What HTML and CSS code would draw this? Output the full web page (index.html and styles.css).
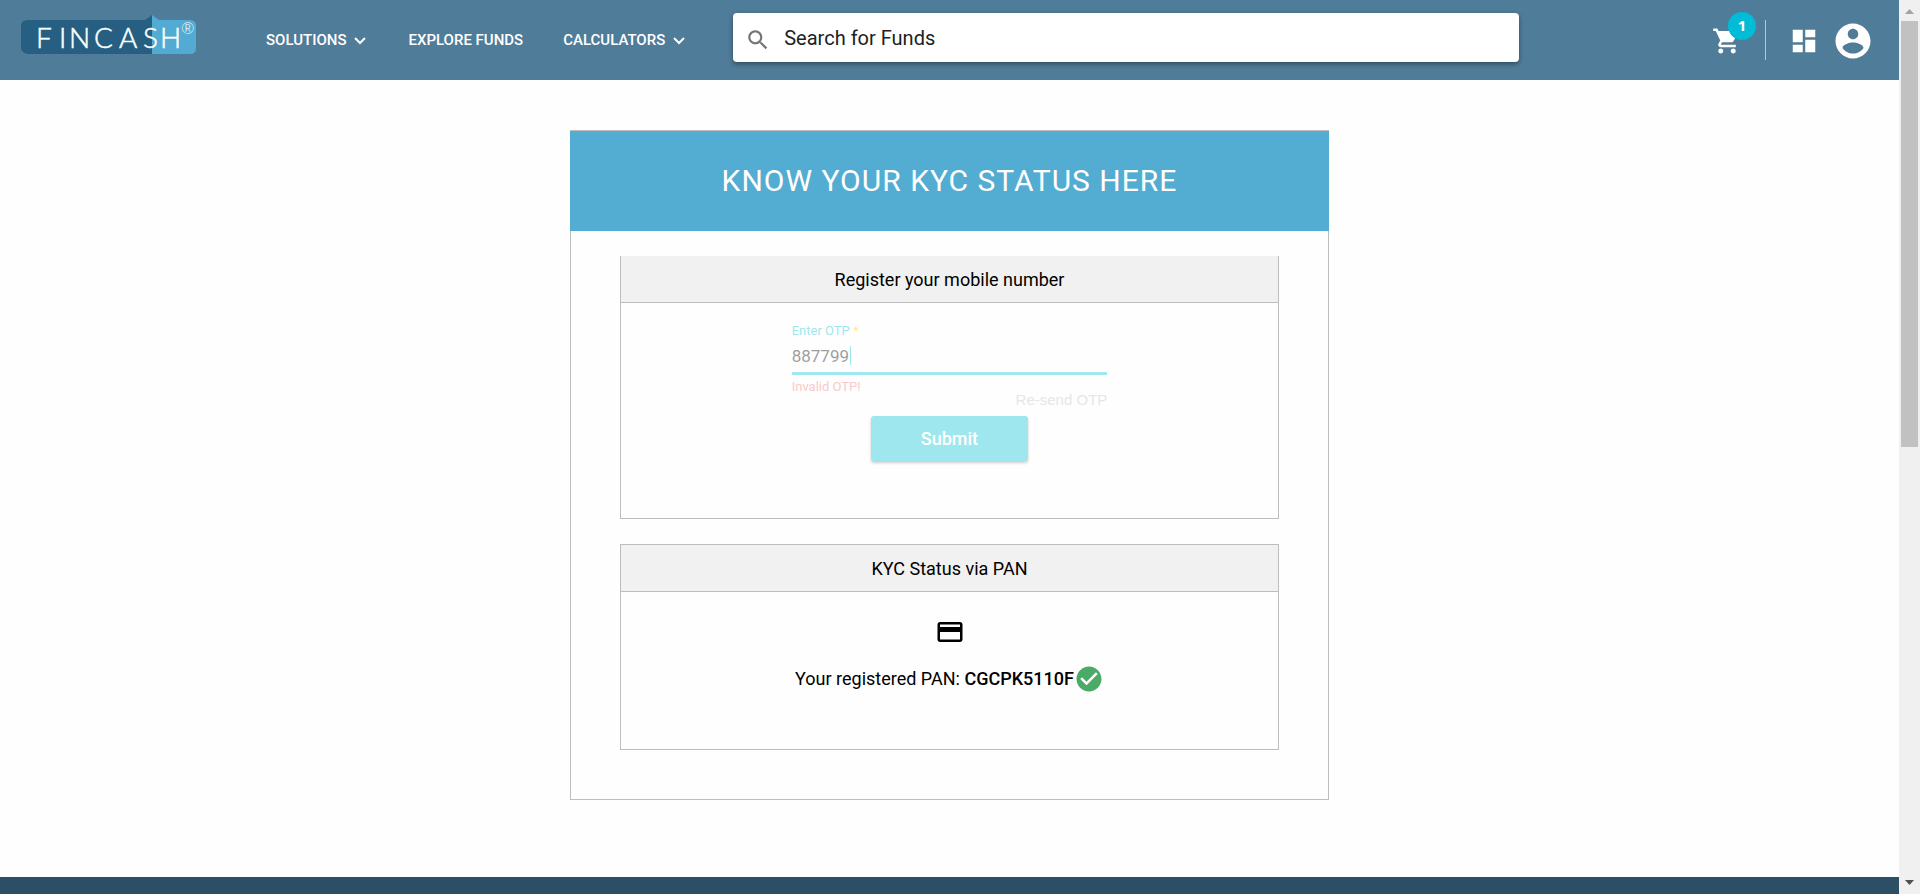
FILE: index.html
```html
<!DOCTYPE html>
<html lang="en">
<head>
<meta charset="utf-8">
<title>Fincash - KYC Status</title>
<link rel="stylesheet" href="styles.css">
</head>
<body>
<div class="page">
  <header class="topbar">
    <a class="logo" href="#" aria-label="Fincash">
      <svg width="176" height="40" viewBox="0 0 176 40">
        <path fill="#265f82" d="M7 5H124L131 0V39H7Q0 38 0 32V11Q0 5 7 5Z"/>
        <path fill="#52abd2" d="M131 0L138 5H169Q175 5 175 11V33Q175 39 169 39H131Z"/>
        <text class="logo-text" x="15 38 48 73 98 122 139" y="33">FINCASH</text>
        <text class="logo-mark" x="160" y="19">®</text>
      </svg>
    </a>
    <nav class="nav">
      <a href="#">SOLUTIONS <svg width="12" height="8" viewBox="0 0 12 8"><path d="M1 1L6 6L11 1"/></svg></a>
      <a href="#">EXPLORE FUNDS</a>
      <a href="#">CALCULATORS <svg width="12" height="8" viewBox="0 0 12 8"><path d="M1 1L6 6L11 1"/></svg></a>
    </nav>
    <label class="search">
      <svg width="26" height="26" viewBox="0 0 24 24"><path d="M15.5 14h-.79l-.28-.27C15.41 12.59 16 11.11 16 9.5 16 5.91 13.09 3 9.5 3S3 5.91 3 9.5 5.91 16 9.5 16c1.61 0 3.09-.59 4.23-1.57l.27.28v.79l5 4.99L20.49 19l-4.99-5zm-6 0C7.01 14 5 11.99 5 9.5S7.01 5 9.5 5 14 7.01 14 9.5 11.99 14 9.5 14z"/></svg>
      <input type="text" placeholder="Search for Funds" aria-label="Search for Funds">
    </label>
    <div class="actions">
      <button class="icon-button cart" aria-label="Cart">
        <svg width="30" height="30" viewBox="0 0 24 24"><path d="M7 18c-1.1 0-1.99.9-1.99 2S5.9 22 7 22s2-.9 2-2-.9-2-2-2zM1 2v2h2l3.6 7.59-1.35 2.45c-.16.28-.25.61-.25.96 0 1.1.9 2 2 2h12v-2H7.42c-.14 0-.25-.11-.25-.25l.03-.12.9-1.63h7.45c.75 0 1.41-.41 1.75-1.03l3.58-6.49c.08-.14.12-.31.12-.48 0-.55-.45-1-1-1H5.21l-.94-2H1zm16 16c-1.1 0-1.99.9-1.99 2s.89 2 1.99 2 2-.9 2-2-.9-2-2-2z"/></svg>
        <span class="badge">1</span>
      </button>
      <span class="divider"></span>
      <button class="icon-button dashboard" aria-label="Dashboard">
        <svg width="30" height="30" viewBox="0 0 24 24"><path d="M3 13h8V3H3v10zm0 8h8v-6H3v6zm10 0h8V11h-8v10zm0-18v6h8V3h-8z"/></svg>
      </button>
      <button class="icon-button account" aria-label="Account">
        <svg width="42" height="42" viewBox="0 0 24 24"><path d="M12 2C6.480 2 2 6.480 2 12s4.480 10 10 10 10-4.480 10-10S17.520 2 12 2zm0 3c1.660 0 3 1.340 3 3s-1.340 3-3 3-3-1.340-3-3 1.340-3 3-3zm0 14.200c-2.500 0-4.710-1.280-6-3.220.03-1.990 4-3.080 6-3.080 1.990 0 5.970 1.090 6 3.080-1.290 1.940-3.500 3.220-6 3.220z"/></svg>
      </button>
    </div>
  </header>

  <main class="card">
    <h1 class="card-title">KNOW YOUR KYC STATUS HERE</h1>
    <div class="card-body">
      <section class="panel panel-mobile">
        <h2 class="panel-title">Register your mobile number</h2>
        <form class="otp-form">
          <label class="otp-label" for="otp">Enter OTP <span class="required">*</span></label>
          <div class="otp-field">
            <input id="otp" type="text" value="887799" size="6">
            <span class="caret"></span>
          </div>
          <p class="otp-error">Invalid OTP!</p>
          <a class="resend" href="#">Re-send OTP</a>
          <button class="submit" type="button">Submit</button>
        </form>
      </section>
      <section class="panel panel-pan">
        <h2 class="panel-title">KYC Status via PAN</h2>
        <div class="pan-status">
          <svg width="30" height="30" viewBox="0 0 24 24"><path d="M20 4H4c-1.110 0-1.990.89-1.990 2L2 18c0 1.110.89 2 2 2h16c1.110 0 2-.89 2-2V6c0-1.110-.89-2-2-2zm0 14H4v-6h16v6zm0-10H4V6h16v2z"/></svg>
          <p class="pan-line"><span>Your registered PAN: <b>CGCPK5110F</b></span>
            <svg class="check" width="30" height="30" viewBox="0 0 24 24"><path d="M12 2C6.480 2 2 6.480 2 12s4.480 10 10 10 10-4.480 10-10S17.520 2 12 2zm-2 15l-5-5 1.410-1.410L10 14.170l7.590-7.590L19 8l-9 9z"/></svg></p>
        </div>
      </section>
    </div>
  </main>
  <footer class="footer"></footer>
</div>
<div class="scrollbar" aria-hidden="true">
  <svg width="21" height="21" viewBox="0 0 21 21"><path fill="#a3a3a3" d="M6 14H15L10.500 9Z"/></svg>
  <div class="track"><div class="thumb"></div></div>
  <svg width="21" height="21" viewBox="0 0 21 21"><path fill="#505050" d="M6 7H15L10.500 12Z"/></svg>
</div>
</body>
</html>
```
FILE: styles.css
```css
* {
  box-sizing: border-box;
}

body {
  margin: 0;
  display: flex;
  height: 100vh;
  overflow: hidden;
  background: #fefefe;
  color: #000;
  font-family: Roboto, "Liberation Sans", sans-serif;
}

h1, h2, p {
  margin: 0;
  font-weight: 400;
}

a {
  color: inherit;
  text-decoration: none;
}

button, input {
  border: 0;
  padding: 0;
  background: none;
  font-family: inherit;
  outline: none;
}

svg {
  display: block;
  flex: none;
}

.page {
  flex: 1;
  display: flex;
  flex-direction: column;
  min-width: 0;
}

.topbar {
  display: flex;
  align-items: center;
  height: 80px;
  flex: none;
  padding: 0 25px 0 21px;
  background: #4f7c99;
  color: #fff;
}

.logo {
  padding-bottom: 10px;
}

.logo-text {
  fill: #fff;
  font-family: Lato, sans-serif;
  font-size: 28px;
  font-weight: 300;
  stroke: #fff;
  stroke-width: 0.5px;
}

.logo-mark {
  fill: #fff;
  font-family: Lato, sans-serif;
  font-size: 16px;
  font-weight: 300;
}

.nav {
  display: flex;
  gap: 40px;
  margin: 0 46px 0 69px;
  font-size: 15px;
  font-weight: 500;
  white-space: nowrap;
}

.nav a {
  display: flex;
  align-items: center;
  gap: 8px;
}

.nav svg {
  margin: 2px 2px 0 0;
  fill: none;
  stroke: #fff;
  stroke-width: 2;
}

.search {
  flex: 1;
  display: flex;
  align-items: center;
  gap: 13px;
  height: 49px;
  margin-bottom: 5px;
  padding: 0 12px;
  border-radius: 4px;
  background: #fff;
  box-shadow: 0 2px 5px rgba(0, 0, 0, 0.4);
}

.search svg {
  margin-top: 4px;
  fill: #757575;
}

.search input {
  flex: 1;
  min-width: 0;
  font-size: 20px;
}

.search input::placeholder {
  color: #212121;
  opacity: 1;
}

.actions {
  display: flex;
  align-items: center;
  margin-left: 193px;
}

.icon-button {
  position: relative;
  padding-top: 2px;
  color: #fff;
}

.icon-button svg {
  fill: #fff;
}

.badge {
  position: absolute;
  top: -12px;
  right: -14px;
  width: 28px;
  height: 28px;
  border-radius: 50%;
  background: #00bcd6;
  font: 700 15px/26px "Open Sans", sans-serif;
  text-align: center;
}

.divider {
  width: 1px;
  height: 40px;
  margin: 0 23px;
  background: #b8c9d4;
}

.account {
  margin-left: 13px;
}

.card {
  width: 40%;
  margin: 50px auto 77px;
  border: 1px solid #bdbdbd;
}

.card-title {
  margin: 0 -1px;
  background: #53acd1;
  color: #fff;
  font-size: 30px;
  line-height: 100px;
  letter-spacing: 1px;
  text-align: center;
}

.card-body {
  display: flex;
  flex-direction: column;
  gap: 25px;
  padding: 25px 49px 49px;
}

.panel {
  border: 1px solid #bdbdbd;
}

.panel-mobile {
  border-top: 0;
  padding-bottom: 57px;
}

.panel-title {
  padding-top: 2px;
  border-bottom: 1px solid #bdbdbd;
  background: #f1f1f1;
  font-size: 18px;
  line-height: 44px;
  text-align: center;
}

.otp-form {
  display: flex;
  flex-direction: column;
  width: 48%;
  margin: 0 auto;
  padding-top: 20px;
}

.otp-label {
  color: #9fe7ee;
  font-size: 13px;
  line-height: 16px;
}

.required {
  color: #ffe9a6;
}

.otp-field {
  display: flex;
  align-items: center;
  height: 36px;
  border-bottom: 3px solid #9fe7ee;
}

.otp-field input {
  width: 58px;
  color: #9e9e9e;
  font-size: 17px;
}

.caret {
  width: 1px;
  height: 19px;
  background: #9fe7ee;
}

.otp-error {
  color: #f8caca;
  font-size: 13px;
  line-height: 24px;
}

.resend {
  align-self: flex-end;
  margin: -8px 0 8px;
  color: #e6e6e6;
  font-family: "Liberation Sans", sans-serif;
  font-size: 15px;
  line-height: 17px;
}

.submit {
  width: 50%;
  height: 45px;
  margin: 0 auto;
  border-radius: 3px;
  background: #9fe7ee;
  box-shadow: 0 2px 3px rgba(0, 0, 0, 0.2);
  color: #fff;
  font-size: 18px;
  font-weight: 500;
}

.pan-status {
  display: flex;
  flex-direction: column;
  align-items: center;
  gap: 17px;
  padding: 25px 0 55px;
}

.pan-line {
  display: flex;
  align-items: center;
  font-size: 18px;
  line-height: 28px;
}

.pan-line b {
  font-weight: 500;
}

.check {
  fill: #4caa68;
}

.footer {
  flex: 1;
  background: #2c4f65;
}

.scrollbar {
  display: flex;
  flex-direction: column;
  width: 21px;
  background: #f0f0f0;
}

.track {
  flex: 1;
  padding: 0 2px;
}

.thumb {
  height: 50%;
  background: #c1c1c1;
}
```
